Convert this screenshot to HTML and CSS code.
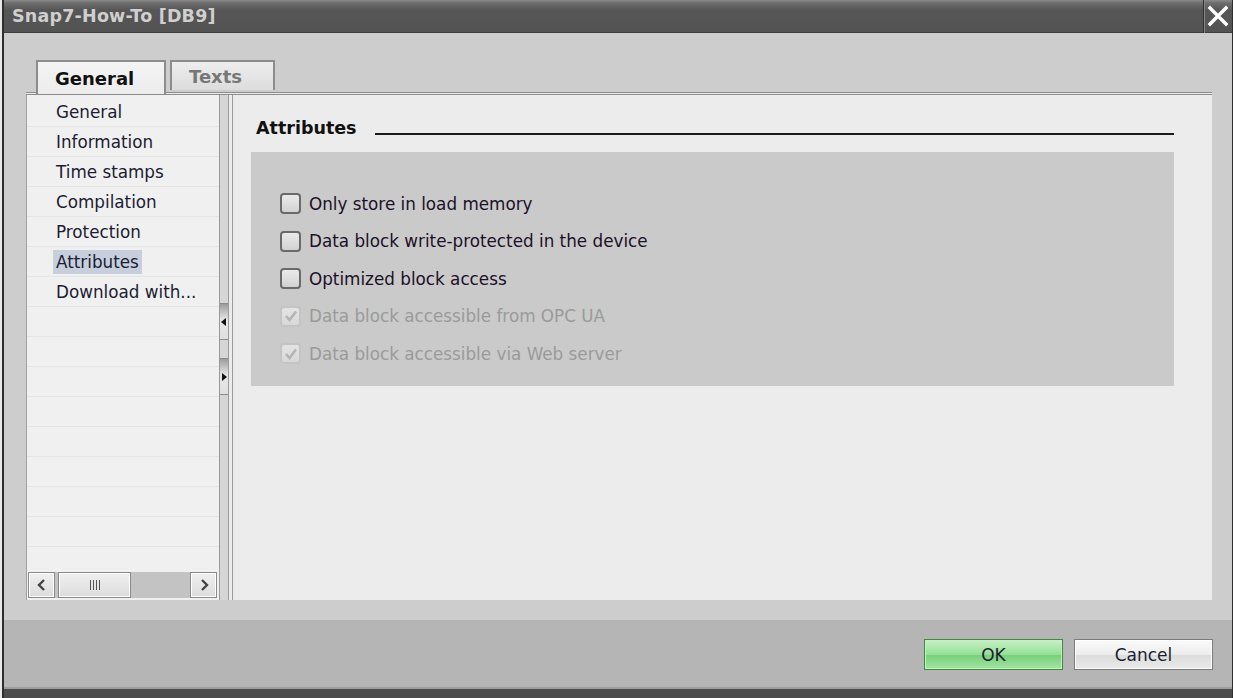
FILE: index.html
```html
<!DOCTYPE html>
<html lang="en">
<head>
    <meta charset="UTF-8">
    <meta name="viewport" content="width=device-width, initial-scale=1.0">
    <title>Snap7-How-To [DB9]</title>
    <link rel="stylesheet" href="styles.css">
</head>
<body>
    <div class="window">
        <div class="titlebar">
            <span class="title">Snap7-How-To [DB9]</span>
            <span class="close">
                <svg width="22" height="22" viewBox="0 0 22 22"><path d="M3 3 L19 19 M19 3 L3 19" stroke="#fff" stroke-width="3.4" stroke-linecap="square"/></svg>
            </span>
        </div>

        <div class="body">
            <div class="tabs">
                <div class="tab active">General</div>
                <div class="tab">Texts</div>
            </div>

            <div class="panel">
                <div class="nav">
                    <ul class="nav-list">
                        <li><span>General</span></li>
                        <li><span>Information</span></li>
                        <li><span>Time stamps</span></li>
                        <li><span>Compilation</span></li>
                        <li><span>Protection</span></li>
                        <li class="selected"><span>Attributes</span></li>
                        <li><span>Download with...</span></li>
                        <li></li><li></li><li></li><li></li><li></li><li></li><li></li><li></li>
                    </ul>
                    <div class="hscroll">
                        <div class="sb-btn">
                            <svg width="12" height="14" viewBox="0 0 12 14"><path d="M8 2 L3 7 L8 12" fill="none" stroke="#444" stroke-width="2.4"/></svg>
                        </div>
                        <div class="sb-thumb">
                            <svg width="12" height="10" viewBox="0 0 12 10"><path d="M1.5 0V10M4.5 0V10M7.5 0V10M10.5 0V10" stroke="#555" stroke-width="1"/></svg>
                        </div>
                        <div class="sb-track"></div>
                        <div class="sb-btn">
                            <svg width="12" height="14" viewBox="0 0 12 14"><path d="M4 2 L9 7 L4 12" fill="none" stroke="#444" stroke-width="2.4"/></svg>
                        </div>
                    </div>
                </div>

                <div class="splitter">
                    <div class="split-btn">
                        <svg width="6" height="8" viewBox="0 0 6 8"><path d="M5 0 L0 4 L5 8 Z" fill="#111"/></svg>
                    </div>
                    <div class="split-btn">
                        <svg width="6" height="8" viewBox="0 0 6 8"><path d="M1 0 L6 4 L1 8 Z" fill="#111"/></svg>
                    </div>
                </div>

                <div class="content">
                    <div class="section-head">
                        <h2>Attributes</h2>
                        <span class="rule"></span>
                    </div>
                    <div class="group">
                        <label class="check"><span class="box"></span>Only store in load memory</label>
                        <label class="check"><span class="box"></span>Data block write-protected in the device</label>
                        <label class="check"><span class="box"></span>Optimized block access</label>
                        <label class="check disabled"><span class="box">
                            <svg width="16" height="16" viewBox="0 0 16 16"><path d="M3 8 L6.5 12 L13 3.5" fill="none" stroke="#b4b4b4" stroke-width="2.6"/></svg>
                        </span>Data block accessible from OPC UA</label>
                        <label class="check disabled"><span class="box">
                            <svg width="16" height="16" viewBox="0 0 16 16"><path d="M3 8 L6.5 12 L13 3.5" fill="none" stroke="#b4b4b4" stroke-width="2.6"/></svg>
                        </span>Data block accessible via Web server</label>
                    </div>
                </div>
            </div>
        </div>

        <div class="footer">
            <button class="btn ok">OK</button>
            <button class="btn">Cancel</button>
        </div>
    </div>
</body>
</html>
```

FILE: styles.css
```css
body {
    margin: 0;
    padding: 0;
    background-color: #e8e8e8;
    font-family: "DejaVu Sans", Verdana, sans-serif;
    overflow: hidden;
}
.window {
    width: 1231px;
    height: 698px;
    margin-left: 2px;
    display: flex;
    flex-direction: column;
    border-left: 2px solid #2e2e2e;
    border-right: 1px solid #2e2e2e;
    box-sizing: border-box;
    background-color: #cdcdcd;
}

/* title bar */
.titlebar {
    height: 33px;
    flex: none;
    display: flex;
    align-items: center;
    justify-content: space-between;
    background: linear-gradient(#8a8a8a 0, #6e6e6e 3px, #565656 10px, #535353);
    border-bottom: 1px solid #3e3e3e;
    box-sizing: border-box;
}
.title {
    color: #cfcfcf;
    font-size: 17.5px;
    font-weight: bold;
    padding-left: 8px;
    letter-spacing: 0.2px;
}
.close {
    width: 28px;
    height: 33px;
    display: flex;
    align-items: center;
    justify-content: center;
    border-left: 1px solid #2e2e2e;
    box-shadow: inset 1px 0 #8a8a8a;
}

/* body */
.body {
    flex: 1;
    min-height: 0;
    display: flex;
    flex-direction: column;
    padding: 27px 20px 20px 22px;
}
.tabs {
    display: flex;
    gap: 4px;
    padding-left: 10px;
    height: 32px;
    flex: none;
    align-items: flex-start;
    position: relative;
    z-index: 1;
}
.tab {
    height: 30px;
    width: 105px;
    box-sizing: border-box;
    padding: 0 0 0 17px;
    border: 2px solid #8c8c8c;
    border-bottom: none;
    background: linear-gradient(#eeeeee, #dcdcdc);
    color: #777;
    font-size: 18px;
    font-weight: bold;
    display: flex;
    align-items: center;
}
.tab.active {
    height: 34px;
    width: 130px;
    background: linear-gradient(#f4f4f4, #ececec);
    color: #111;
}
.panel {
    flex: 1;
    min-height: 0;
    display: flex;
    border-top: 3px double #8c8c8c;
    background-color: #ececec;
}

/* left navigation */
.nav {
    width: 193px;
    display: flex;
    flex-direction: column;
    background-color: #f0f0f0;
    border-left: 1px solid #a0a0a0;
    box-sizing: border-box;
    padding-top: 2px;
}
.nav-list {
    list-style: none;
    margin: 0;
    padding: 0;
    flex: 1;
    min-height: 0;
    overflow: hidden;
}
.nav-list li {
    height: 30px;
    box-sizing: border-box;
    border-bottom: 1px solid #e4e4e4;
    padding-left: 29px;
    display: flex;
    align-items: center;
    font-size: 16.8px;
    color: #1c1c34;
}
.nav-list li span {
    padding: 2px 3px;
    margin-left: -3px;
}
.nav-list li.selected span {
    background-color: #c6cfdb;
}
.hscroll {
    height: 26px;
    flex: none;
    display: flex;
    margin: 0 2px 2px 1px;
    background-color: #c3c3c3;
}
.sb-btn, .sb-thumb {
    box-sizing: border-box;
    border: 1px solid #8a8a8a;
    box-shadow: inset 0 0 0 1px #fff;
    background: linear-gradient(#f0f0f0, #dcdcdc);
    display: flex;
    align-items: center;
    justify-content: center;
}
.sb-btn {
    width: 27px;
}
.sb-thumb {
    width: 73px;
    margin-left: 3px;
}
.sb-track {
    flex: 1;
}

/* splitter */
.splitter {
    width: 14px;
    box-sizing: border-box;
    border-left: 1px solid #9a9a9a;
    border-right: 1px solid #9a9a9a;
    background-color: #d6d6d6;
    box-shadow: inset -3px 0 #ececec, inset -4px 0 #9a9a9a;
    padding-top: 208px;
    padding-right: 4px;
}
.split-btn {
    height: 35px;
    margin-bottom: 18px;
    background: linear-gradient(#9c9c9c, #e6e6e6 45%, #e0e0e0);
    border-top: 1px solid #8a8a8a;
    border-bottom: 1px solid #8a8a8a;
    display: flex;
    align-items: center;
    justify-content: center;
}

/* content */
.content {
    flex: 1;
    padding: 17px 38px 0 18px;
}
.section-head {
    display: flex;
    align-items: flex-end;
    gap: 18px;
    padding-left: 5px;
    height: 27px;
}
.section-head h2 {
    margin: 0;
    font-size: 17.5px;
    font-weight: bold;
    color: #111;
    line-height: 22px;
}
.rule {
    flex: 1;
    height: 2px;
    background-color: #1a1a1a;
    margin-bottom: 4px;
}
.group {
    margin-top: 13px;
    height: 234px;
    background-color: #cacaca;
    padding: 33px 0 0 29px;
    box-sizing: border-box;
    display: flex;
    flex-direction: column;
}
.check {
    display: flex;
    align-items: center;
    gap: 8px;
    height: 37.5px;
    flex: none;
    font-size: 16.8px;
    color: #1c1028;
}
.check.disabled {
    color: #9a9a9a;
}
.box {
    width: 21px;
    height: 21px;
    box-sizing: border-box;
    border: 2px solid #6a6a6a;
    border-radius: 4px;
    background: linear-gradient(#eaeaea, #d2d2d2);
    display: flex;
    align-items: center;
    justify-content: center;
}
.check.disabled .box {
    border-color: #c4c4c4;
    background: linear-gradient(#e4e4e4, #d8d8d8);
}

/* footer */
.footer {
    height: 78px;
    flex: none;
    box-sizing: border-box;
    background-color: #b5b5b5;
    border-bottom: 9px solid #4c4c4c;
    box-shadow: inset 0 -2px #9c9c9c;
    display: flex;
    justify-content: flex-end;
    align-items: flex-start;
    padding: 19px 19px 0 0;
    gap: 11px;
}
.btn {
    width: 139px;
    height: 31px;
    border: 1px solid #7c7c7c;
    box-shadow: inset 0 0 0 1px #fff;
    background: linear-gradient(#fbfbfb, #ececec 50%, #dcdcdc 52%, #eaeaea);
    font-family: "DejaVu Sans", Verdana, sans-serif;
    font-size: 17px;
    color: #1c1c34;
    padding: 0;
}
.btn.ok {
    border-color: #3f8a3f;
    box-shadow: inset 0 0 0 1px #c4f0c4;
    background: linear-gradient(#c8f0c8, #94e094 50%, #78d078 52%, #a4e4a4);
}
```
